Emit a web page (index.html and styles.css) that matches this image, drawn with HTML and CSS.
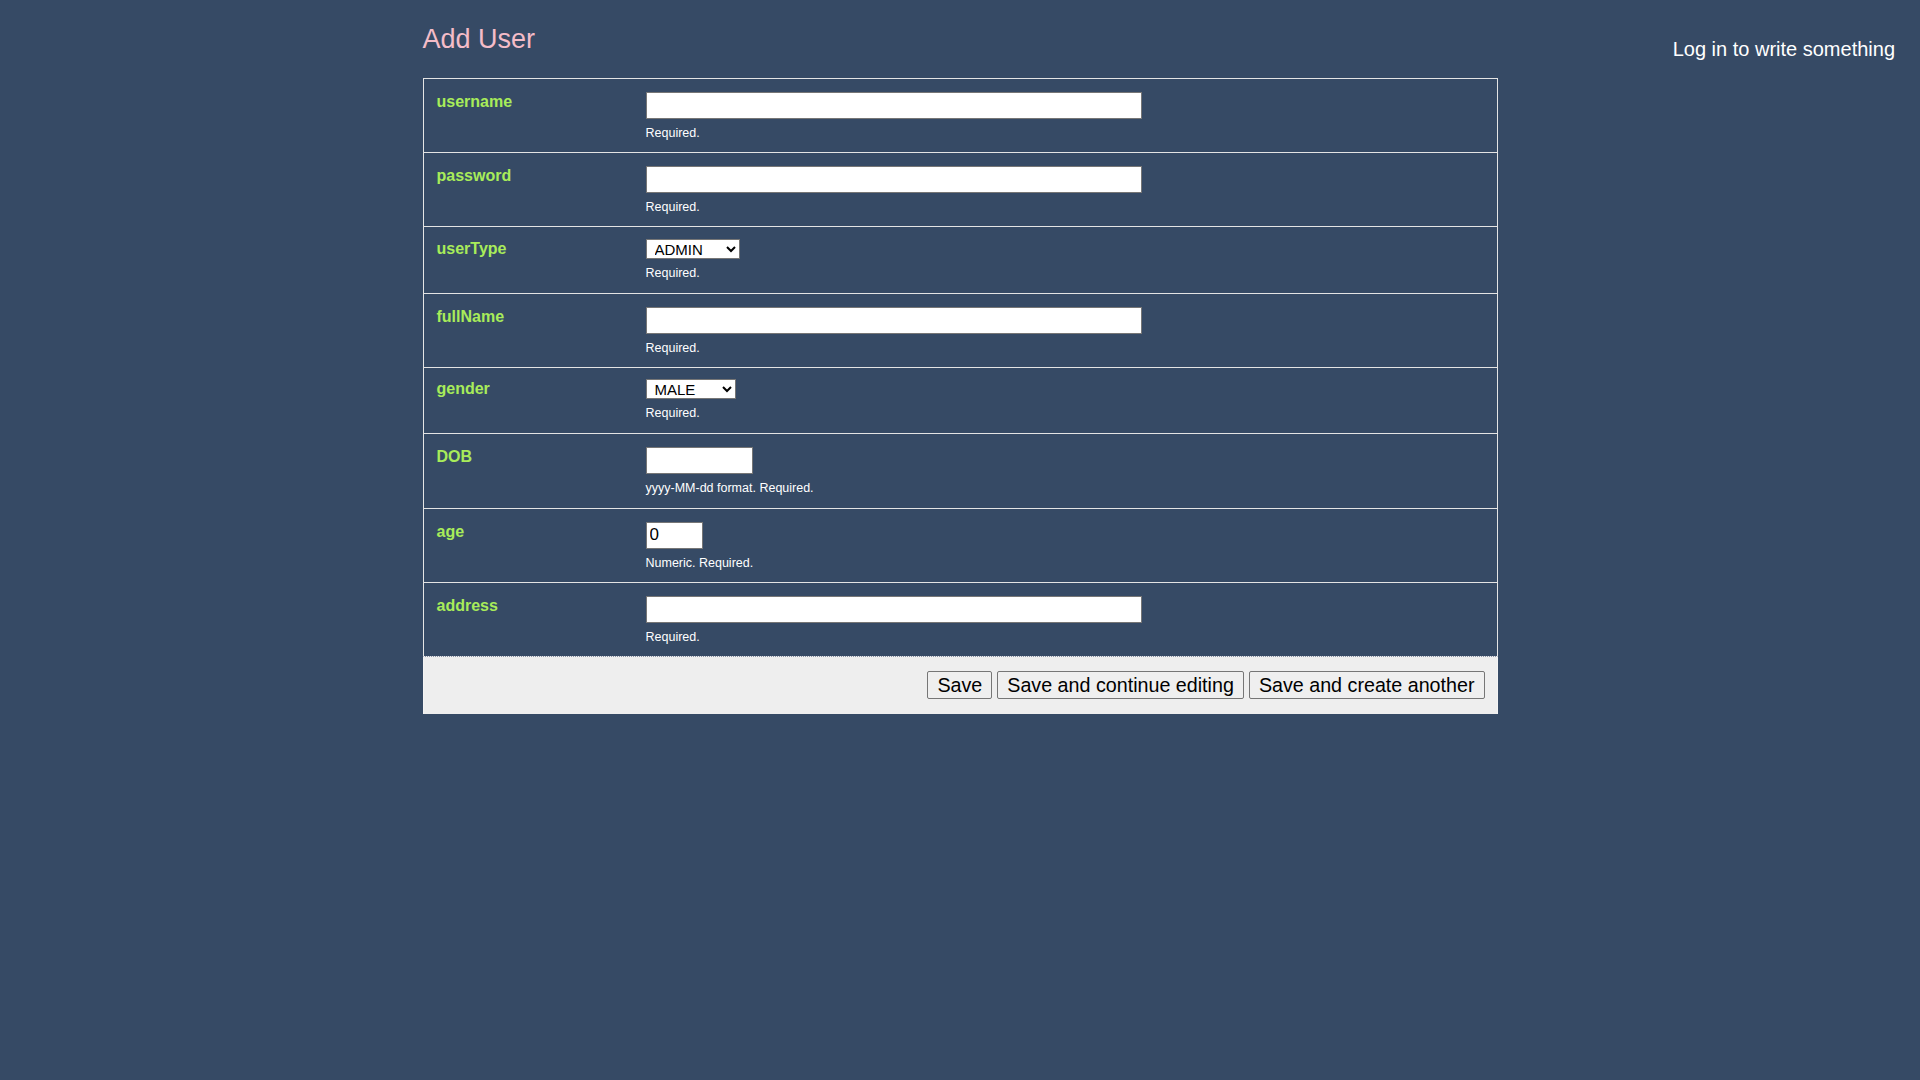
FILE: index.html
```html
<!DOCTYPE html>
<html lang="en">
<head>
<meta charset="utf-8">
<title>Add User</title>
<link rel="stylesheet" href="styles.css">
</head>
<body>
<div class="page">
  <main class="content">
    <h1 class="title">Add User</h1>
    <form class="form">
      <div class="rows">
        <div class="row">
          <label class="label" for="f-username">username</label>
          <div class="field">
            <input class="input input-wide" id="f-username" type="text">
            <p class="help">Required.</p>
          </div>
        </div>
        <div class="row">
          <label class="label" for="f-password">password</label>
          <div class="field">
            <input class="input input-wide" id="f-password" type="password">
            <p class="help">Required.</p>
          </div>
        </div>
        <div class="row row-select">
          <label class="label" for="f-usertype">userType</label>
          <div class="field">
            <select class="select select-type" id="f-usertype">
              <option>ADMIN</option>
              <option>USER</option>
            </select>
            <p class="help">Required.</p>
          </div>
        </div>
        <div class="row">
          <label class="label" for="f-fullname">fullName</label>
          <div class="field">
            <input class="input input-wide" id="f-fullname" type="text">
            <p class="help">Required.</p>
          </div>
        </div>
        <div class="row row-select">
          <label class="label" for="f-gender">gender</label>
          <div class="field">
            <select class="select select-gender" id="f-gender">
              <option>MALE</option>
              <option>FEMALE</option>
            </select>
            <p class="help">Required.</p>
          </div>
        </div>
        <div class="row">
          <label class="label" for="f-dob">DOB</label>
          <div class="field">
            <input class="input input-date" id="f-dob" type="text">
            <p class="help">yyyy-MM-dd format. Required.</p>
          </div>
        </div>
        <div class="row">
          <label class="label" for="f-age">age</label>
          <div class="field">
            <input class="input input-age" id="f-age" type="text" value="0">
            <p class="help">Numeric. Required.</p>
          </div>
        </div>
        <div class="row row-last">
          <label class="label" for="f-address">address</label>
          <div class="field">
            <input class="input input-wide" id="f-address" type="text">
            <p class="help">Required.</p>
          </div>
        </div>
      </div>
      <div class="actions">
        <button class="btn" type="button">Save</button>
        <button class="btn" type="button">Save and continue editing</button>
        <button class="btn" type="button">Save and create another</button>
      </div>
    </form>
  </main>
  <aside class="side">
    <span class="login">Log in to write something</span>
  </aside>
</div>
</body>
</html>
```
FILE: styles.css
```css
html, body {
  margin: 0;
  padding: 0;
}

body {
  background: #364a65;
  font-family: "Liberation Sans", Arial, sans-serif;
  color: #ffffff;
  min-height: 1080px;
}

.page {
  display: grid;
  grid-template-columns: 1fr 1075px 1fr;
}

.content {
  grid-column: 2;
}

.side {
  grid-column: 3;
  display: flex;
  justify-content: flex-end;
  padding: 38px 25px 0 0;
}

.login {
  font-size: 20px;
  line-height: 23px;
  color: #ffffff;
  white-space: nowrap;
}

.title {
  margin: 24px 0 23px;
  font-size: 27px;
  line-height: 31px;
  font-weight: normal;
  color: #f4bcc8;
}

.form {
  margin: 0;
}

.rows {
  border: 1px solid #e4e4e4;
  border-bottom: none;
}

.row {
  display: grid;
  grid-template-columns: 209px 1fr;
  padding: 13px 13px 11.15px;
  border-bottom: 1px solid #e4e4e4;
}

.row-select {
  padding-top: 11.5px;
  padding-bottom: 12px;
}

.row-last {
  border-bottom: none;
}

.label {
  padding-top: 1px;
  font-size: 16px;
  font-weight: bold;
  line-height: 18.4px;
  color: #a8ec5a;
}

.field {
  display: flex;
  flex-direction: column;
  align-items: flex-start;
}

.input {
  display: block;
  box-sizing: border-box;
  height: 27px;
  margin: 0;
  padding: 0 3px;
  border: 1px solid #767676;
  border-radius: 0;
  background: #ffffff;
  font-family: "Liberation Sans", Arial, sans-serif;
  font-size: 17px;
  color: #000000;
}

.input-wide {
  width: 496px;
}

.input-date {
  width: 107px;
}

.input-age {
  width: 57px;
}

.select {
  display: block;
  box-sizing: border-box;
  height: 20px;
  margin: 0;
  padding: 0 0 0 4px;
  border: 1px solid #767676;
  border-radius: 0;
  background: #ffffff;
  font-family: "Liberation Sans", Arial, sans-serif;
  font-size: 15px;
  color: #000000;
}

.select-type {
  width: 94px;
}

.select-gender {
  width: 90px;
}

.help {
  margin: 7px 0 0;
  font-size: 12.5px;
  line-height: 15px;
  color: #ffffff;
}

.actions {
  display: flex;
  justify-content: flex-end;
  gap: 5px;
  padding: 14px 12px 15px;
  background: #eeeeee;
  border-top: 1px dotted #8a93a6;
  border-left: 1px solid #f4f4f4;
  border-right: 1px solid #f4f4f4;
}

.btn {
  box-sizing: border-box;
  height: 28px;
  margin: 0;
  padding: 0 9px;
  border: 1px solid #767676;
  border-radius: 2px;
  background: #efefef;
  font-family: "Liberation Sans", Arial, sans-serif;
  font-size: 19.7px;
  line-height: 26px;
  color: #000000;
}
```
